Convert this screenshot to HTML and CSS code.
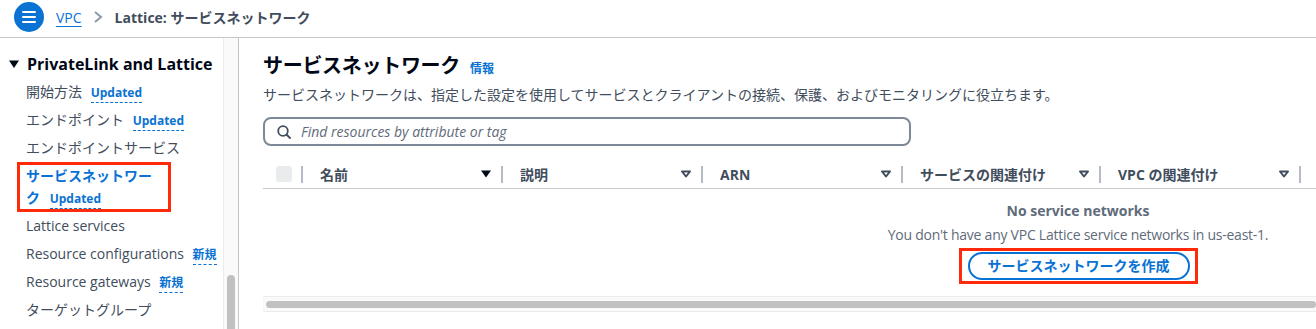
FILE: index.html
```html
<!DOCTYPE html>
<html lang="ja">
<head>
    <meta charset="UTF-8">
    <title>Lattice: サービスネットワーク</title>
    <link rel="stylesheet" href="styles.css">
</head>
<body>
    <header class="topbar">
        <button class="menu-btn" aria-label="メニュー">
            <svg width="14" height="12" viewBox="0 0 14 12"><path d="M1 1h12M1 6h12M1 11h12" stroke="#fff" stroke-width="2" stroke-linecap="round"/></svg>
        </button>
        <nav class="crumbs">
            <a href="#" class="crumb-link">VPC</a>
            <svg class="crumb-sep" width="10" height="14" viewBox="0 0 10 14"><path d="M2 2l6 5-6 5" fill="none" stroke="#8d99a8" stroke-width="2"/></svg>
            <span class="crumb-current">Lattice: サービスネットワーク</span>
        </nav>
    </header>

    <div class="layout">
        <aside class="sidebar">
            <div class="nav-section">
                <svg class="caret" width="10" height="10" viewBox="0 0 10 10"><path d="M0 1.5h10L5 9z" fill="#000716"/></svg>
                PrivateLink and Lattice
            </div>
            <ul class="nav-list">
                <li>開始方法 <span class="badge">Updated</span></li>
                <li>エンドポイント <span class="badge">Updated</span></li>
                <li>エンドポイントサービス</li>
                <li class="active">サービスネットワーク <span class="badge">Updated</span></li>
                <li>Lattice services</li>
                <li>Resource configurations <span class="badge">新規</span></li>
                <li>Resource gateways <span class="badge">新規</span></li>
                <li>ターゲットグループ</li>
            </ul>
        </aside>
        <div class="side-scroll"><div class="side-thumb"></div></div>

        <main class="content">
            <h1 class="page-title">サービスネットワーク <a href="#" class="info-link">情報</a></h1>
            <p class="page-desc">サービスネットワークは、指定した設定を使用してサービスとクライアントの接続、保護、およびモニタリングに役立ちます。</p>

            <div class="search">
                <svg width="14" height="14" viewBox="0 0 14 14"><circle cx="6" cy="6" r="4.8" fill="none" stroke="#414d5c" stroke-width="1.8"/><path d="M9.5 9.5l3.5 3.5" stroke="#414d5c" stroke-width="1.8" stroke-linecap="round"/></svg>
                <span class="search-placeholder">Find resources by attribute or tag</span>
            </div>

            <div class="table-wrap">
                <div class="table">
                    <div class="thead">
                        <div class="th th-check"><span class="checkbox"></span><span class="spacer"></span><span class="divider"></span></div>
                        <div class="th"><span class="th-label">名前</span><svg class="sort" width="12" height="10" viewBox="0 0 12 10"><path d="M1 1.5h10L6 8.5z" fill="#000716"/></svg><span class="divider"></span></div>
                        <div class="th"><span class="th-label">説明</span><svg class="sort" width="12" height="10" viewBox="0 0 12 10"><path d="M2 2.5h8L6 7.5z" fill="none" stroke="#414d5c" stroke-width="2" stroke-linejoin="round"/></svg><span class="divider"></span></div>
                        <div class="th"><span class="th-label">ARN</span><svg class="sort" width="12" height="10" viewBox="0 0 12 10"><path d="M2 2.5h8L6 7.5z" fill="none" stroke="#414d5c" stroke-width="2" stroke-linejoin="round"/></svg><span class="divider"></span></div>
                        <div class="th th-narrow"><span class="th-label">サービスの関連付け</span><svg class="sort" width="12" height="10" viewBox="0 0 12 10"><path d="M2 2.5h8L6 7.5z" fill="none" stroke="#414d5c" stroke-width="2" stroke-linejoin="round"/></svg><span class="divider"></span></div>
                        <div class="th"><span class="th-label">VPC の関連付け</span><svg class="sort" width="12" height="10" viewBox="0 0 12 10"><path d="M2 2.5h8L6 7.5z" fill="none" stroke="#414d5c" stroke-width="2" stroke-linejoin="round"/></svg><span class="divider"></span></div>
                        <div class="th"></div>
                    </div>
                    <div class="empty">
                        <div class="empty-title">No service networks</div>
                        <div class="empty-text">You don't have any VPC Lattice service networks in us-east-1.</div>
                        <span class="highlight"><button class="btn-normal">サービスネットワークを作成</button></span>
                    </div>
                </div>
            </div>
            <div class="hscroll"><div class="hscroll-thumb"></div></div>
        </main>
    </div>
</body>
</html>
```
FILE: styles.css
```css
* { box-sizing: border-box; }
body { margin: 0; font-family: "Open Sans", "Noto Sans CJK JP", sans-serif; font-size: 14px; color: #000716; background: #fff; overflow: hidden; }

.topbar { height: 38px; display: flex; align-items: center; padding-left: 14px; border-bottom: 1px solid #c6c6cd; }
.menu-btn { width: 30px; height: 30px; border-radius: 50%; border: none; background: #0972d3; display: flex; align-items: center; justify-content: center; padding: 0; margin-top: -3px; }
.crumbs { display: flex; align-items: center; margin-left: 12px; margin-top: -3px; }
.crumb-link { color: #0972d3; text-decoration: underline; text-underline-offset: 3px; }
.crumb-sep { margin: 0 12px 0 11px; }
.crumb-current { font-weight: 700; color: #414d5c; }

.layout { display: flex; height: 291px; }
.sidebar { width: 223px; flex-shrink: 0; padding: 14px 4px 0 8px; }
.nav-section { display: flex; align-items: center; height: 24px; font-size: 16px; font-weight: 700; margin-bottom: 2px; }
.caret { margin: 0 8px 0 1px; }
.nav-list { list-style: none; margin: 0; padding: 0 0 0 18px; color: #414d5c; }
.nav-list li { height: 28px; line-height: 22px; padding: 3px 0; overflow: hidden; }
.nav-list li.active { height: 50px; overflow: visible; color: #0972d3; font-weight: 700; width: 154px; margin-left: -9px; padding: 0 6px; border: 3px solid #ff2a0a; }
.badge { font-size: 12px; font-weight: 700; color: #0972d3; margin-left: 5px; border-bottom: 1px dashed #0972d3; padding-bottom: 1px; }
.active .badge { margin-left: 6px; }

.side-scroll { width: 16px; flex-shrink: 0; background: #fafafa; border-left: 1px solid #ececec; border-right: 1px solid #c6c6cd; padding: 237px 0 0 3px; }
.side-thumb { width: 8px; height: 60px; border-radius: 4px; background: #c1c1c1; }

.content { flex: 1; min-width: 0; padding: 16px 0 0 24px; overflow: hidden; }
.page-title { margin: 0; height: 24px; display: flex; align-items: baseline; font-size: 20px; line-height: 24px; font-weight: 700; letter-spacing: -0.3px; }
.info-link { font-size: 12px; font-weight: 700; color: #0972d3; text-decoration: none; margin-left: 10px; letter-spacing: 0; }
.page-desc { margin: 6px 0 0; height: 22px; line-height: 22px; color: #414d5c; }

.search { width: 648px; height: 29px; margin-top: 11px; border: 2px solid #7d8998; border-radius: 8px; display: flex; align-items: center; padding-left: 12px; }
.search-placeholder { font-style: italic; color: #5f6b7a; margin-left: 10px; }

.table-wrap { overflow: hidden; margin-top: 14px; }
.table { width: 1630px; }
.thead { display: flex; height: 29px; border-bottom: 1px solid #c6c6cd; font-weight: 700; color: #414d5c; }
.th { width: 200px; display: flex; align-items: center; padding-left: 17px; }
.th-narrow { width: 198px; }
.th-check { width: 40px; padding-left: 13px; }
.checkbox { width: 16px; height: 16px; border-radius: 3px; background: #e9ebed; }
.th-label { flex: 1; }
.spacer { flex: 1; }
.sort { margin-right: 9px; }
.divider { width: 2px; height: 17px; background: #b4bbc4; }

.empty { height: 108px; border-bottom: 1px solid #e9ebed; text-align: center; padding-top: 11px; color: #5f6b7a; }
.empty-title { font-weight: 700; height: 22px; line-height: 22px; }
.empty-text { height: 22px; line-height: 22px; margin-top: 2px; letter-spacing: -0.25px; }
.highlight { display: inline-block; margin-top: 2px; border: 3px solid #ff2a0a; padding: 1px 5px 1px 6px; }
.btn-normal { font-family: inherit; font-size: 14px; font-weight: 700; color: #0972d3; background: #fff; border: 2px solid #0972d3; border-radius: 16px; padding: 2px 18px; height: 28px; line-height: 20px; cursor: pointer; display: block; }

.hscroll { height: 15px; border-bottom: 1px solid #e9ebed; background: #fafafa; padding: 4px 0 0 3px; }
.hscroll-thumb { height: 7px; border-radius: 4px; background: #c1c1c1; }
```
